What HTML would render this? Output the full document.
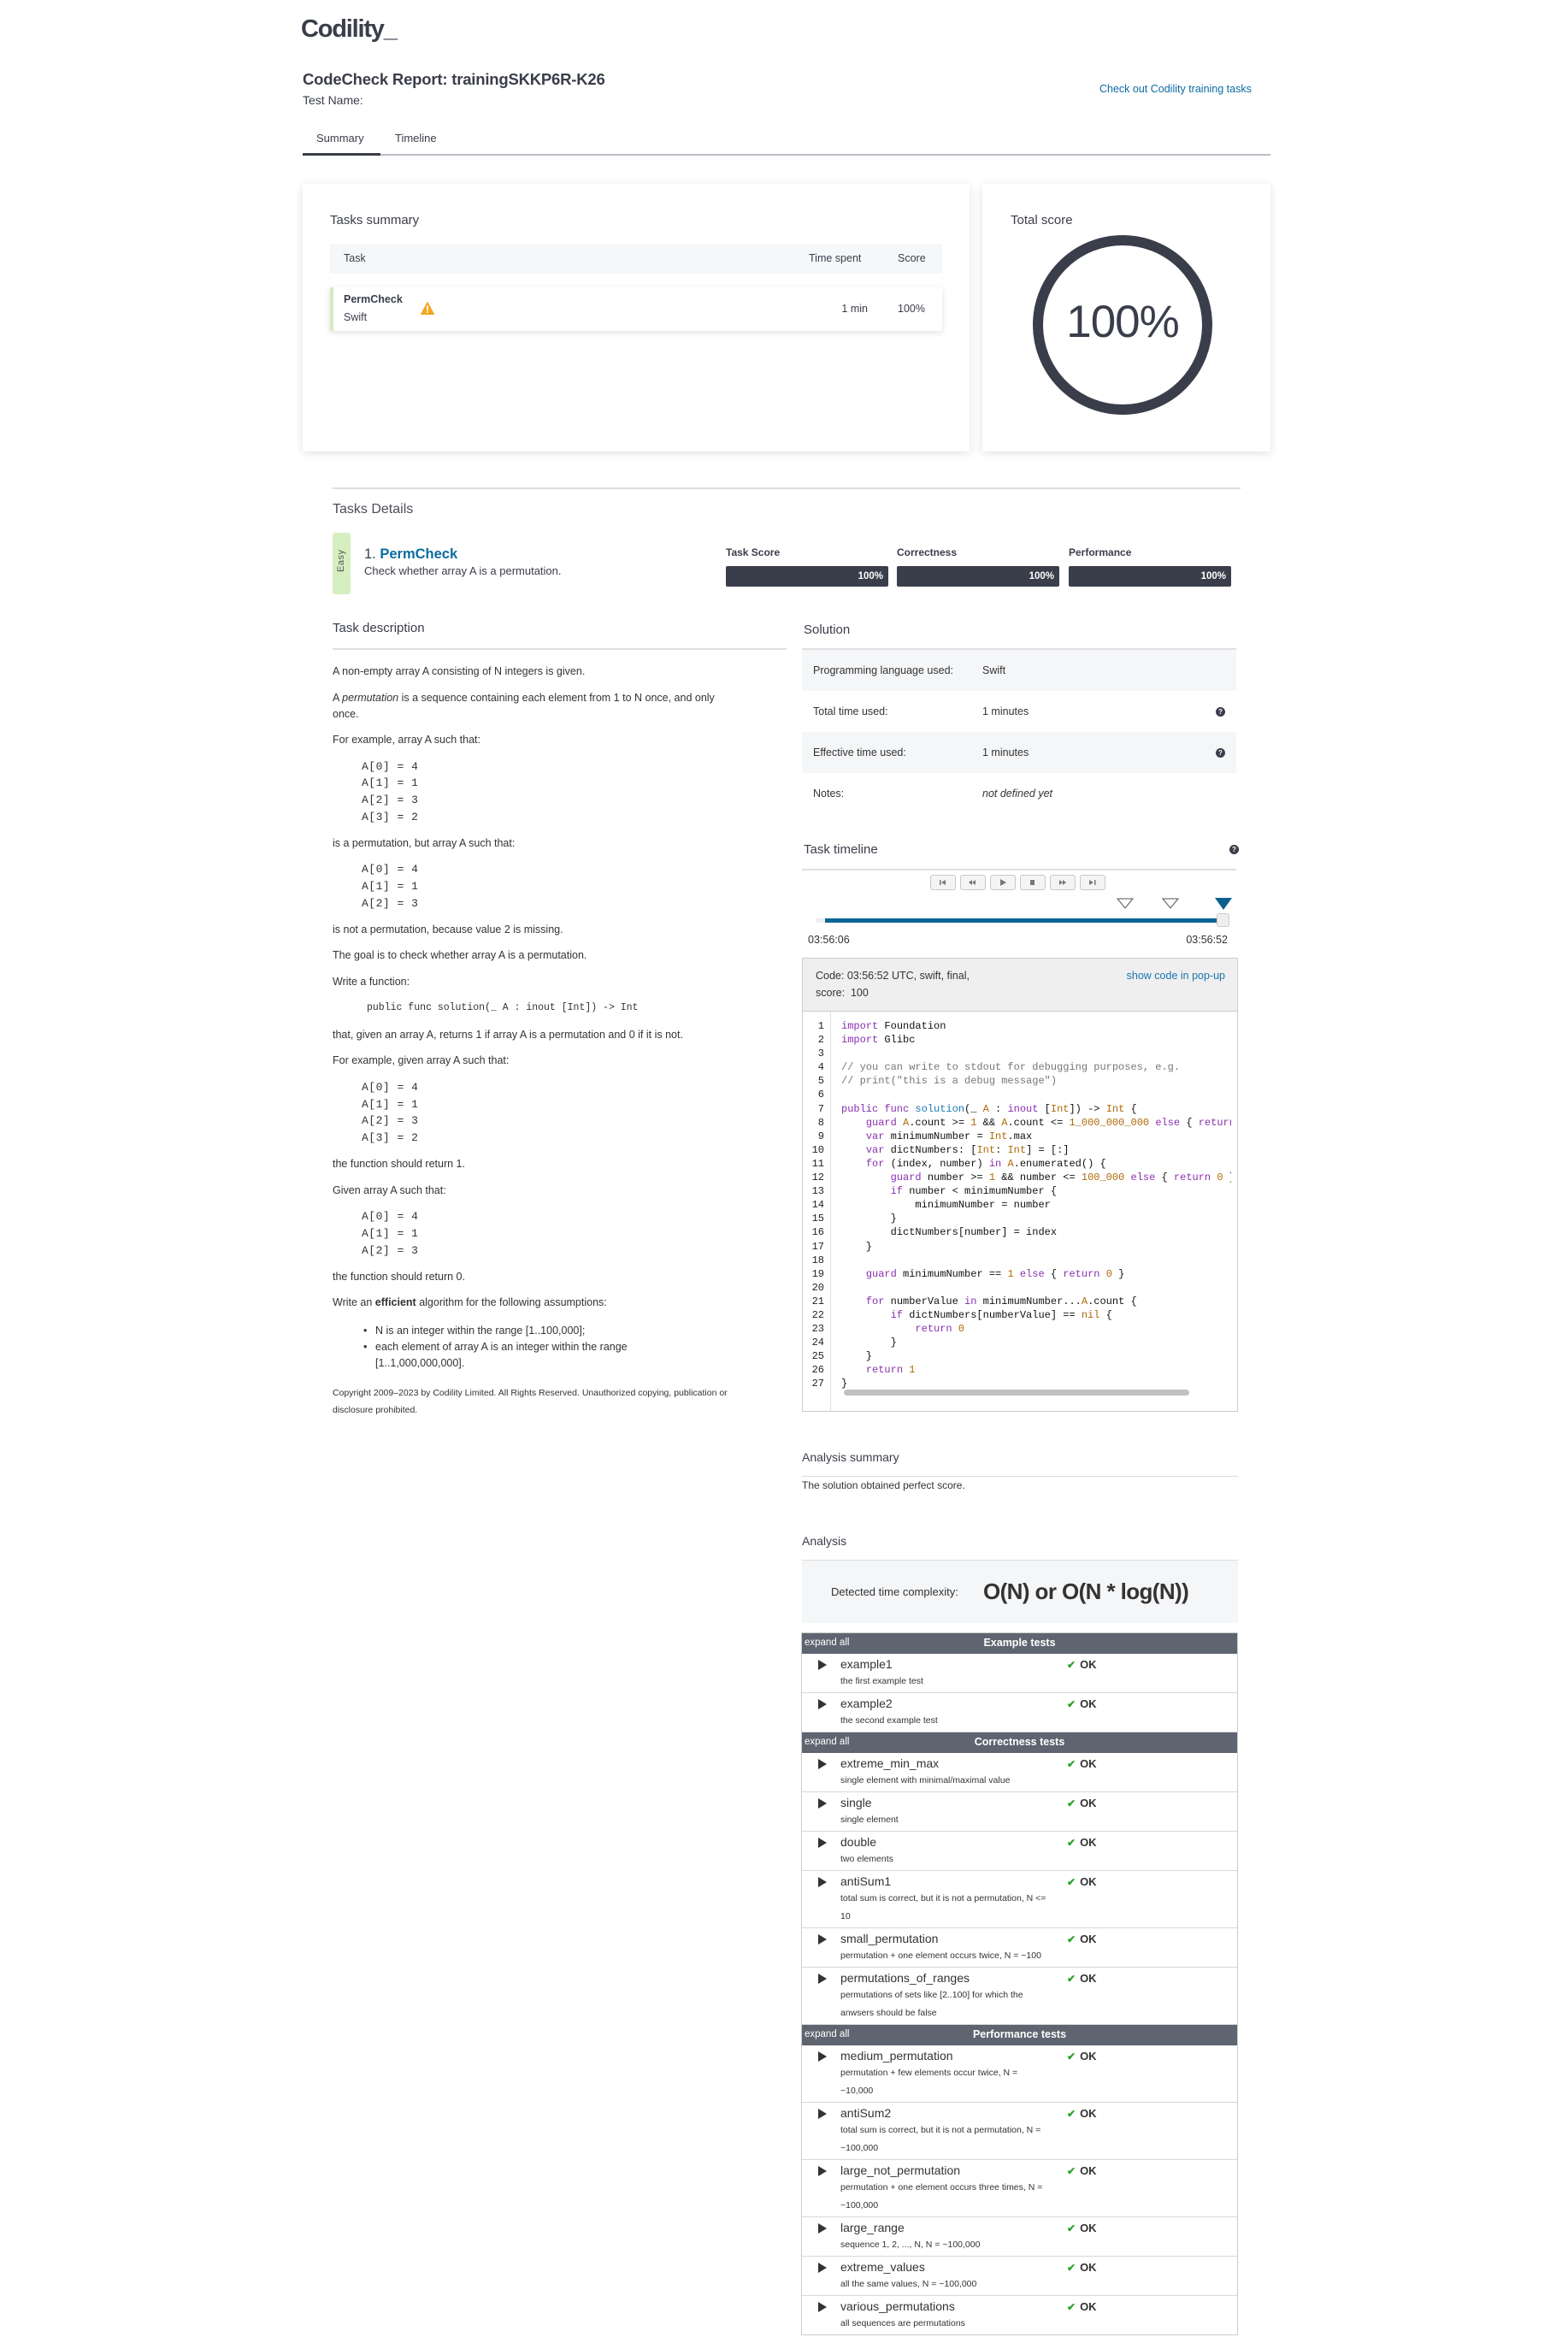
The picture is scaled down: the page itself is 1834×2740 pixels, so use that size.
<!DOCTYPE html>
<html><head><meta charset="utf-8">
<style>
*{margin:0;padding:0;box-sizing:border-box}
body{width:1834px;height:2740px;position:relative;background:#fff;font-family:"Liberation Sans",Arial,sans-serif;color:#3a3d4a;overflow:hidden}
.a{position:absolute;white-space:nowrap}
.card{position:absolute;background:#fff;box-shadow:0 2px 10px rgba(0,0,0,0.12)}
.p{font-size:12.5px;line-height:19px;margin-bottom:11.5px;color:#333}
.mono{font-family:"Liberation Mono",monospace}
.pre{font-family:"Liberation Mono",monospace;font-size:13px;line-height:19.7px;margin:0 0 11.5px 34px;color:#333;white-space:pre;letter-spacing:0.5px}
.bar{position:absolute;height:24px;background:#3a3d4a;border-radius:2px;color:#fff;font-size:11.5px;font-weight:bold;text-align:right;padding-right:6px;line-height:24px}
.srow{position:absolute;left:938px;width:508px;height:48px;font-size:12.5px;color:#333;line-height:48px}
.q{position:absolute;width:11px;height:11px;border-radius:50%;background:#3a3d4a;color:#fff;font-size:8px;line-height:11px;text-align:center;font-weight:bold}
.btn{position:absolute;top:1023px;width:30px;height:18px;border:1px solid #c8c8c8;border-radius:3px;background:#f4f4f4}
.code{font-family:"Liberation Mono",monospace;font-size:12px;line-height:16.1px;white-space:pre;color:#111}
.k{color:#8a2fb0}.t{color:#b06a08}.f{color:#1b79b5}.c{color:#777}
.tt{position:absolute;left:937px;top:1909px;width:511px;border:1px solid #ccc;border-bottom:none}
.hd{height:24px;background:#5e6570;color:#fff;position:relative}
.hd .e{position:absolute;left:3px;top:5px;font-size:11.5px}
.hd .h{text-align:center;font-weight:bold;font-size:12.5px;line-height:22px}
.r{position:relative;border-bottom:1px solid #d8d8d8;padding:2px 0 2px 45px}
.r .n{font-size:14px;line-height:20px;color:#333}
.r .d{font-size:10.5px;line-height:21px;color:#333;white-space:nowrap}
.r .tri{position:absolute;left:19px;top:7px;width:0;height:0;border-left:10px solid #333;border-top:6px solid transparent;border-bottom:6px solid transparent}
.r .ok{position:absolute;left:310px;top:3px;font-size:13px;font-weight:bold;color:#333;line-height:20px}
.r .ok span{color:#2aa02a;margin-right:5px;font-size:12px}
</style></head><body>

<div class="a" style="left:352px;top:18px;font-size:29px;font-weight:bold;letter-spacing:-1.2px;color:#3a3d4a">Codility_</div>
<div class="a" style="left:354px;top:82px;font-size:18.5px;font-weight:bold;color:#3a3d4a;letter-spacing:-0.2px">CodeCheck Report: trainingSKKP6R-K26</div>
<div class="a" style="left:354px;top:109px;font-size:14px;color:#3a3d4a">Test Name:</div>
<div class="a" style="left:1286px;top:97px;font-size:12.5px;color:#0a6aa1">Check out Codility training tasks</div>

<div class="a" style="left:370px;top:154px;font-size:13px;color:#3a3d4a">Summary</div>
<div class="a" style="left:462px;top:154px;font-size:13px;color:#3a3d4a">Timeline</div>
<div class="a" style="left:354px;top:180px;width:1132px;height:2px;background:#b9bdc6"></div>
<div class="a" style="left:354px;top:179px;width:91px;height:3px;background:#3a3d4a"></div>

<div class="card" style="left:354px;top:215px;width:780px;height:313px"></div>
<div class="card" style="left:1149px;top:215px;width:337px;height:313px"></div>
<div class="a" style="left:386px;top:249px;font-size:15px;color:#3a3d4a">Tasks summary</div>
<div class="a" style="left:386px;top:285px;width:716px;height:35px;background:#f6f7f9"></div>
<div class="a" style="left:402px;top:295px;font-size:12.5px">Task</div>
<div class="a" style="left:946px;top:295px;font-size:12.5px">Time spent</div>
<div class="a" style="left:1050px;top:295px;font-size:12.5px">Score</div>
<div class="a" style="left:386px;top:336px;width:716px;height:51px;background:#fff;box-shadow:0 2px 8px rgba(0,0,0,0.12);border-left:4px solid #d3ecbf;border-radius:2px"></div>
<div class="a" style="left:402px;top:343px;font-size:12.5px;font-weight:bold;color:#3a3d4a">PermCheck</div>
<div class="a" style="left:402px;top:364px;font-size:12.5px;color:#3a3d4a">Swift</div>
<svg class="a" style="left:492px;top:353px" width="16" height="15" viewBox="0 0 16 15"><path d="M8 0.5 L15.5 14.5 L0.5 14.5 Z" fill="#f5a41c" stroke="#f5a41c" stroke-linejoin="round"/><rect x="7" y="4.5" width="2" height="5.5" fill="#fff"/><rect x="7" y="11" width="2" height="2" fill="#fff"/></svg>
<div class="a" style="left:970px;top:354px;width:45px;text-align:right;font-size:12.5px">1 min</div>
<div class="a" style="left:1050px;top:354px;font-size:12.5px">100%</div>

<div class="a" style="left:1182px;top:249px;font-size:15px;color:#3a3d4a">Total score</div>
<svg class="a" style="left:1203px;top:270px" width="220" height="220"><circle cx="110" cy="110" r="99" fill="none" stroke="#3a3d4a" stroke-width="12"/></svg>
<div class="a" style="left:1213px;top:347px;width:200px;text-align:center;font-size:53px;letter-spacing:-1px;color:#3a3d4a;line-height:60px">100%</div>

<div class="a" style="left:389px;top:570px;width:1062px;height:2px;background:#ddd"></div>
<div class="a" style="left:389px;top:587px;font-size:16px;color:#4a4d58">Tasks Details</div>
<div class="a" style="left:389px;top:623px;width:21px;height:72px;background:#d6efc1;border-radius:3px"></div>
<div class="a" style="left:388px;top:652px;width:22px;transform:rotate(-90deg);font-size:11px;color:#555;text-align:center;letter-spacing:0.5px">Easy</div>
<div class="a" style="left:426px;top:639px;font-size:16.5px;color:#3a3d4a">1. <span style="color:#0a6aa1;font-weight:bold">PermCheck</span></div>
<div class="a" style="left:426px;top:660px;font-size:13px;color:#3a3d4a">Check whether array A is a permutation.</div>
<div class="a" style="left:849px;top:639px;font-size:12px;font-weight:bold;color:#3a3d4a">Task Score</div>
<div class="a" style="left:1049px;top:639px;font-size:12px;font-weight:bold;color:#3a3d4a">Correctness</div>
<div class="a" style="left:1250px;top:639px;font-size:12px;font-weight:bold;color:#3a3d4a">Performance</div>
<div class="bar" style="left:849px;top:662px;width:190px">100%</div>
<div class="bar" style="left:1049px;top:662px;width:190px">100%</div>
<div class="bar" style="left:1250px;top:662px;width:190px">100%</div>

<!-- Task description -->
<div class="a" style="left:389px;top:726px;font-size:15px;color:#3a3d4a">Task description</div>
<div class="a" style="left:389px;top:758px;width:531px;height:2px;background:#e0e0e0"></div>
<div class="a" style="left:389px;top:776px;width:530px">
<div class="p">A non-empty array A consisting of N integers is given.</div>
<div class="p">A <i>permutation</i> is a sequence containing each element from 1 to N once, and only<br>once.</div>
<div class="p">For example, array A such that:</div>
<div class="pre">A[0] = 4
A[1] = 1
A[2] = 3
A[3] = 2</div>
<div class="p">is a permutation, but array A such that:</div>
<div class="pre">A[0] = 4
A[1] = 1
A[2] = 3</div>
<div class="p">is not a permutation, because value 2 is missing.</div>
<div class="p">The goal is to check whether array A is a permutation.</div>
<div class="p">Write a function:</div>
<div class="p mono" style="font-size:11.5px;padding-left:40px;white-space:pre;margin-bottom:12.5px">public func solution(_ A : inout [Int]) -&gt; Int</div>
<div class="p">that, given an array A, returns 1 if array A is a permutation and 0 if it is not.</div>
<div class="p">For example, given array A such that:</div>
<div class="pre">A[0] = 4
A[1] = 1
A[2] = 3
A[3] = 2</div>
<div class="p">the function should return 1.</div>
<div class="p">Given array A such that:</div>
<div class="pre">A[0] = 4
A[1] = 1
A[2] = 3</div>
<div class="p">the function should return 0.</div>
<div class="p" style="margin-bottom:14px">Write an <b>efficient</b> algorithm for the following assumptions:</div>
<div class="p" style="padding-left:50px;position:relative;margin-bottom:15px">
<div style="position:relative"><span style="position:absolute;left:-14px">•</span>N is an integer within the range [1..100,000];</div>
<div style="position:relative"><span style="position:absolute;left:-14px">•</span>each element of array A is an integer within the range<br>[1..1,000,000,000].</div>
</div>
<div style="font-size:10.5px;line-height:20px;color:#333">Copyright 2009–2023 by Codility Limited. All Rights Reserved. Unauthorized copying, publication or<br>disclosure prohibited.</div>
</div>

<!-- Solution -->
<div class="a" style="left:940px;top:728px;font-size:15px;color:#3a3d4a">Solution</div>
<div class="a" style="left:938px;top:758px;width:508px;height:2px;background:#e0e0e0"></div>
<div class="srow" style="top:760px;background:#f5f6f8"><span class="a" style="left:13px">Programming language used:</span><span class="a" style="left:211px">Swift</span></div>
<div class="srow" style="top:808px"><span class="a" style="left:13px">Total time used:</span><span class="a" style="left:211px">1 minutes</span></div>
<div class="srow" style="top:856px;background:#f5f6f8"><span class="a" style="left:13px">Effective time used:</span><span class="a" style="left:211px">1 minutes</span></div>
<div class="srow" style="top:904px"><span class="a" style="left:13px">Notes:</span><span class="a" style="left:211px;font-style:italic">not defined yet</span></div>
<div class="q" style="left:1422px;top:827px">?</div>
<div class="q" style="left:1422px;top:875px">?</div>

<div class="a" style="left:940px;top:985px;font-size:15px;color:#3a3d4a">Task timeline</div>
<div class="q" style="left:1438px;top:988px">?</div>
<div class="a" style="left:938px;top:1016px;width:508px;height:2px;background:#e0e0e0"></div>
<div class="btn" style="left:1088px"><svg width="28" height="16"><rect x="10" y="5" width="1.5" height="6" fill="#777"/><path d="M12 8 L17 5 L17 11Z" fill="#777"/></svg></div>
<div class="btn" style="left:1123px"><svg width="28" height="16"><path d="M9 8 L13 5 L13 11Z M13 8 L17 5 L17 11Z" fill="#777"/></svg></div>
<div class="btn" style="left:1158px"><svg width="28" height="16"><path d="M11 4 L18 8 L11 12Z" fill="#777"/></svg></div>
<div class="btn" style="left:1193px"><svg width="28" height="16"><rect x="11" y="5" width="5" height="6" fill="#777"/></svg></div>
<div class="btn" style="left:1228px"><svg width="28" height="16"><path d="M10 5 L14 8 L10 11Z M14 5 L18 8 L14 11Z" fill="#777"/></svg></div>
<div class="btn" style="left:1263px"><svg width="28" height="16"><path d="M10 5 L15 8 L10 11Z" fill="#777"/><rect x="16" y="5" width="1.5" height="6" fill="#777"/></svg></div>
<svg class="a" style="left:1305px;top:1049px" width="140" height="16"><path d="M2 2 L20 2 L11 13Z" fill="#fff" stroke="#555" stroke-width="1"/><path d="M55 2 L73 2 L64 13Z" fill="#fff" stroke="#555" stroke-width="1"/><path d="M116 1 L136 1 L126 15Z" fill="#0d5f8c"/></svg>
<div class="a" style="left:955px;top:1074px;width:480px;height:5px;background:#eee"></div>
<div class="a" style="left:965px;top:1074px;width:465px;height:5px;background:#0b6497"></div>
<div class="a" style="left:1423px;top:1068px;width:15px;height:16px;background:#eee;border:1px solid #ccc;border-radius:3px"></div>
<div class="a" style="left:945px;top:1092px;font-size:12.5px;color:#333">03:56:06</div>
<div class="a" style="left:1376px;top:1092px;width:60px;text-align:right;font-size:12.5px;color:#333">03:56:52</div>

<!-- code -->
<div class="a" style="left:938px;top:1120px;width:510px;height:531px;border:1px solid #ccc;overflow:hidden;background:#fff">
<div style="height:62px;background:#efefef;border-bottom:1px solid #ccc;position:relative;font-size:12.5px;color:#333;line-height:20px">
<div style="position:absolute;left:15px;top:10px">Code: 03:56:52 UTC, swift, final,<br>score: &nbsp;100</div>
<div style="position:absolute;right:14px;top:10px;color:#1a75b0">show code in pop-up</div>
</div>
<div style="position:absolute;left:32px;top:62px;width:1px;height:470px;background:#ddd"></div>
<div class="code" style="position:absolute;left:0;top:71px;width:25px;text-align:right;color:#222">1
2
3
4
5
6
7
8
9
10
11
12
13
14
15
16
17
18
19
20
21
22
23
24
25
26
27</div>
<div class="code" style="position:absolute;left:45px;top:71px;width:456px;overflow:hidden"><span class="k">import</span> Foundation
<span class="k">import</span> Glibc

<span class="c">// you can write to stdout for debugging purposes, e.g.</span>
<span class="c">// print("this is a debug message")</span>

<span class="k">public func</span> <span class="f">solution</span>(_ <span class="t">A</span> : <span class="k">inout</span> [<span class="t">Int</span>]) -&gt; <span class="t">Int</span> {
    <span class="k">guard</span> <span class="t">A</span>.count &gt;= <span class="t">1</span> &amp;&amp; <span class="t">A</span>.count &lt;= <span class="t">1_000_000_000</span> <span class="k">else</span> { <span class="k">return</span> <span class="t">0</span> }
    <span class="k">var</span> minimumNumber = <span class="t">Int</span>.max
    <span class="k">var</span> dictNumbers: [<span class="t">Int</span>: <span class="t">Int</span>] = [:]
    <span class="k">for</span> (index, number) <span class="k">in</span> <span class="t">A</span>.enumerated() {
        <span class="k">guard</span> number &gt;= <span class="t">1</span> &amp;&amp; number &lt;= <span class="t">100_000</span> <span class="k">else</span> { <span class="k">return</span> <span class="t">0</span> }
        <span class="k">if</span> number &lt; minimumNumber {
            minimumNumber = number
        }
        dictNumbers[number] = index
    }

    <span class="k">guard</span> minimumNumber == <span class="t">1</span> <span class="k">else</span> { <span class="k">return</span> <span class="t">0</span> }

    <span class="k">for</span> numberValue <span class="k">in</span> minimumNumber...<span class="t">A</span>.count {
        <span class="k">if</span> dictNumbers[numberValue] == <span class="t">nil</span> {
            <span class="k">return</span> <span class="t">0</span>
        }
    }
    <span class="k">return</span> <span class="t">1</span>
}</div>
<div style="position:absolute;left:48px;top:504px;width:404px;height:7px;background:#c1c1c1;border-radius:4px"></div>
</div>

<!-- Analysis -->
<div class="a" style="left:938px;top:1696px;font-size:14px;color:#3a3d4a">Analysis summary</div>
<div class="a" style="left:938px;top:1726px;width:510px;height:1px;background:#ddd"></div>
<div class="a" style="left:938px;top:1730px;font-size:12px;color:#333">The solution obtained perfect score.</div>
<div class="a" style="left:938px;top:1794px;font-size:14px;color:#3a3d4a">Analysis</div>
<div class="a" style="left:938px;top:1824px;width:510px;height:1px;background:#ddd"></div>
<div class="a" style="left:938px;top:1825px;width:510px;height:73px;background:#f5f6f8"></div>
<div class="a" style="left:972px;top:1854px;font-size:13px;color:#333">Detected time complexity:</div>
<div class="a" style="left:1150px;top:1846px;font-size:26px;font-weight:bold;color:#333;letter-spacing:-0.6px">O(N) or O(N * log(N))</div>

<div class="tt">
<div class="hd"><span class="e">expand all</span><div class="h">Example tests</div></div>
<div class="r"><div class="tri"></div><div class="n">example1</div><div class="d">the first example test</div><div class="ok"><span>✔</span>OK</div></div>
<div class="r"><div class="tri"></div><div class="n">example2</div><div class="d">the second example test</div><div class="ok"><span>✔</span>OK</div></div>
<div class="hd"><span class="e">expand all</span><div class="h">Correctness tests</div></div>
<div class="r"><div class="tri"></div><div class="n">extreme_min_max</div><div class="d">single element with minimal/maximal value</div><div class="ok"><span>✔</span>OK</div></div>
<div class="r"><div class="tri"></div><div class="n">single</div><div class="d">single element</div><div class="ok"><span>✔</span>OK</div></div>
<div class="r"><div class="tri"></div><div class="n">double</div><div class="d">two elements</div><div class="ok"><span>✔</span>OK</div></div>
<div class="r"><div class="tri"></div><div class="n">antiSum1</div><div class="d">total sum is correct, but it is not a permutation, N &lt;=<br>10</div><div class="ok"><span>✔</span>OK</div></div>
<div class="r"><div class="tri"></div><div class="n">small_permutation</div><div class="d">permutation + one element occurs twice, N = ~100</div><div class="ok"><span>✔</span>OK</div></div>
<div class="r"><div class="tri"></div><div class="n">permutations_of_ranges</div><div class="d">permutations of sets like [2..100] for which the<br>anwsers should be false</div><div class="ok"><span>✔</span>OK</div></div>
<div class="hd"><span class="e">expand all</span><div class="h">Performance tests</div></div>
<div class="r"><div class="tri"></div><div class="n">medium_permutation</div><div class="d">permutation + few elements occur twice, N =<br>~10,000</div><div class="ok"><span>✔</span>OK</div></div>
<div class="r"><div class="tri"></div><div class="n">antiSum2</div><div class="d">total sum is correct, but it is not a permutation, N =<br>~100,000</div><div class="ok"><span>✔</span>OK</div></div>
<div class="r"><div class="tri"></div><div class="n">large_not_permutation</div><div class="d">permutation + one element occurs three times, N =<br>~100,000</div><div class="ok"><span>✔</span>OK</div></div>
<div class="r"><div class="tri"></div><div class="n">large_range</div><div class="d">sequence 1, 2, ..., N, N = ~100,000</div><div class="ok"><span>✔</span>OK</div></div>
<div class="r"><div class="tri"></div><div class="n">extreme_values</div><div class="d">all the same values, N = ~100,000</div><div class="ok"><span>✔</span>OK</div></div>
<div class="r" style="border-bottom:1px solid #ccc"><div class="tri"></div><div class="n">various_permutations</div><div class="d">all sequences are permutations</div><div class="ok"><span>✔</span>OK</div></div>
</div>

</body></html>
